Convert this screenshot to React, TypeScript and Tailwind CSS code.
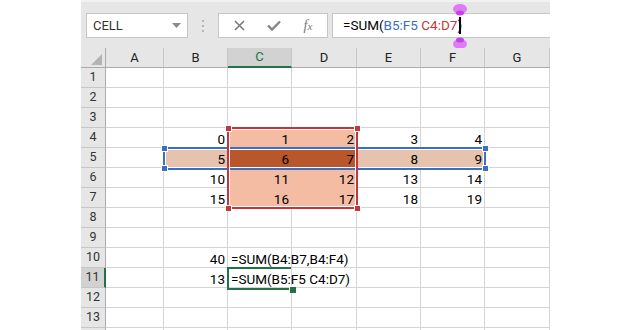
const columns = [
  { key: "A", w: 58 },
  { key: "B", w: 64 },
  { key: "C", w: 64 },
  { key: "D", w: 65 },
  { key: "E", w: 64 },
  { key: "F", w: 64 },
  { key: "G", w: 65 },
]

const rows = [1, 2, 3, 4, 5, 6, 7, 8, 9, 10, 11, 12, 13, 14]

const values: Record<number, Record<string, string>> = {
  4: { B: "0", C: "1", D: "2", E: "3", F: "4" },
  5: { B: "5", C: "6", D: "7", E: "8", F: "9" },
  6: { B: "10", C: "11", D: "12", E: "13", F: "14" },
  7: { B: "15", C: "16", D: "17", E: "18", F: "19" },
  10: { B: "40" },
  11: { B: "13" },
}

const formulas: Record<number, string> = {
  10: "=SUM(B4:B7,B4:F4)",
  11: "=SUM(B5:F5 C4:D7)",
}

function cellFill(row: number, col: string) {
  const inRed = row >= 4 && row <= 7 && (col === "C" || col === "D")
  if (row === 5 && inRed) return "bg-[#b8572b] border-[#b8572b]"
  if (inRed) return "bg-[#f4bca2] border-[#f4bca2]"
  if (row === 5 && (col === "B" || col === "E" || col === "F")) return "bg-[#e5c3af] border-[#e5c3af]"
  return "border-[#d4d4d4]"
}

function Handle({ x, y, color }: { x: number; y: number; color: string }) {
  return (
    <div
      className={`absolute w-[7px] h-[7px] border border-white ${color}`}
      style={{ left: x - 3, top: y - 3 }}
    />
  )
}

function Toolbar() {
  return (
    <div className="h-[48px] border-t-2 border-[#f2f2f2] flex items-start pt-[11px] pl-[5px]">
      <div className="w-[102px] h-[25px] bg-white border border-[#c6c6c6] flex items-center justify-between pl-[6px] pr-[6px]">
        <span className="text-[13px] text-[#333] font-['Roboto',sans-serif]">CELL</span>
        <svg width="9" height="5" viewBox="0 0 9 5">
          <path d="M0 0 L9 0 L4.5 5 Z" fill="#8a8a8a" />
        </svg>
      </div>
      <div className="w-[30px] h-[25px] flex flex-col items-center justify-center gap-[3px]">
        <div className="w-[2px] h-[2px] bg-[#b5b5b5]" />
        <div className="w-[2px] h-[2px] bg-[#b5b5b5]" />
        <div className="w-[2px] h-[2px] bg-[#b5b5b5]" />
      </div>
      <div className="w-[110px] h-[25px] bg-white border border-[#c6c6c6] flex items-center">
        <div className="w-[38px] flex justify-center pl-[2px]">
          <svg width="11" height="11" viewBox="0 0 11 11">
            <path d="M1 1 L10 10 M10 1 L1 10" stroke="#7a7a7a" strokeWidth="1.6" />
          </svg>
        </div>
        <div className="w-[34px] flex justify-center">
          <svg width="14" height="11" viewBox="0 0 14 11">
            <path d="M1 5.5 L5 9.5 L13 1.5" stroke="#858585" strokeWidth="2.4" fill="none" />
          </svg>
        </div>
        <div className="w-[34px] flex justify-center">
          <span className="text-[14px] italic text-[#777] font-['Liberation_Serif',serif] leading-none">
            f<span className="text-[11px]">x</span>
          </span>
        </div>
      </div>
      <div className="relative ml-[4px] w-[218px] h-[25px] bg-white border border-[#c6c6c6] border-r-0 flex items-center pl-[10px]">
        <span className="text-[13.5px] text-black font-['Roboto',sans-serif] whitespace-nowrap">
          =SUM(<span className="text-[#3a6fc4]">B5:F5</span>
          <span className="text-[#c8353a]"> C4:D7</span>)
        </span>
        <div className="absolute left-[126px] top-[3px] w-[2px] h-[17px] bg-black" />
        <svg className="absolute left-[120px] top-[-11px]" width="14" height="14" viewBox="0 0 14 14">
          <ellipse cx="7" cy="6" rx="7" ry="5" fill="#e07af7" />
          <ellipse cx="7" cy="10" rx="4" ry="2.5" fill="#c342e2" />
        </svg>
        <svg className="absolute left-[120px] top-[22px]" width="14" height="14" viewBox="0 0 14 14">
          <ellipse cx="7" cy="8" rx="7" ry="5" fill="#e07af7" />
          <ellipse cx="7" cy="4" rx="4" ry="2.5" fill="#c342e2" />
        </svg>
      </div>
    </div>
  )
}

function Sheet() {
  return (
    <div className="relative grid grid-cols-[25px_58px_64px_64px_65px_64px_64px_65px] bg-white">
      <div className="h-[20px] bg-[#e6e6e6] border-r border-b border-[#ababab] flex items-end justify-end pr-[3px] pb-[2px]">
        <svg width="11" height="11" viewBox="0 0 11 11">
          <path d="M11 0 L11 11 L0 11 Z" fill="#b4b4b4" />
        </svg>
      </div>
      {columns.map((c) => (
        <div
          key={c.key}
          className={
            c.key === "C"
              ? "h-[20px] bg-[#d2d2d2] border-r border-[#c6c6c6] border-b-2 border-b-[#217346] flex items-center justify-center text-[13px] text-[#217346] font-['Roboto',sans-serif]"
              : "h-[20px] bg-[#e6e6e6] border-r border-[#c6c6c6] border-b border-b-[#ababab] flex items-center justify-center text-[13px] text-[#222] font-['Roboto',sans-serif]"
          }
        >
          {c.key}
        </div>
      ))}
      {rows.map((r) => (
        <div key={r} className="contents">
          <div
            className={
              r === 11
                ? "h-[20px] bg-[#d2d2d2] border-b border-[#c6c6c6] border-r-2 border-r-[#217346] flex items-center justify-center text-[12.5px] text-[#333] font-['Roboto',sans-serif]"
                : "h-[20px] bg-[#e6e6e6] border-b border-[#c6c6c6] border-r border-r-[#ababab] flex items-center justify-center text-[12.5px] text-[#333] font-['Roboto',sans-serif]"
            }
          >
            {r < 14 ? r : ""}
          </div>
          {columns.map((c) => (
            <div
              key={c.key}
              className={`h-[20px] border-r border-b ${cellFill(r, c.key)} pt-[3px] px-[2px] text-[13.5px] leading-[16px] text-black font-['Roboto',sans-serif] whitespace-nowrap ${
                formulas[r] && c.key === "C" ? "text-left pl-[3px]" : "text-right"
              }`}
            >
              {formulas[r] && c.key === "C" ? (
                <span className="relative z-10">{formulas[r]}</span>
              ) : (
                values[r]?.[c.key] ?? ""
              )}
            </div>
          ))}
        </div>
      ))}

      {/* B5:F5 range */}
      <div className="absolute left-[82px] top-[99px] w-[323px] h-[23px] border-2 border-[#3a6fc4] shadow-[inset_0_0_0_1px_white]" />
      {/* C4:D7 range */}
      <div className="absolute left-[146px] top-[79px] w-[131px] h-[82px] border-2 border-[#c5363b] shadow-[inset_0_0_0_1px_white]" />
      <Handle x={83} y={100} color="bg-[#3a6fc4]" />
      <Handle x={83} y={120} color="bg-[#3a6fc4]" />
      <Handle x={404} y={100} color="bg-[#3a6fc4]" />
      <Handle x={404} y={120} color="bg-[#3a6fc4]" />
      <Handle x={147} y={80} color="bg-[#c5363b]" />
      <Handle x={276} y={80} color="bg-[#c5363b]" />
      <Handle x={147} y={160} color="bg-[#c5363b]" />
      <Handle x={276} y={160} color="bg-[#c5363b]" />

      {/* active cell C11 */}
      <div className="absolute left-[146px] top-[219px] w-[64px] h-[23px] border-2 border-r-0 border-[#217346]" />
      <div className="absolute left-[208px] top-[238px] w-[7px] h-[7px] bg-[#217346] border-l border-t border-white" />
    </div>
  )
}

export default function App() {
  return (
    <div className="w-[631px] h-[330px] bg-white overflow-hidden">
      <div className="ml-[81px] w-[469px] h-[330px] bg-[#e6e6e6] overflow-hidden">
        <Toolbar />
        <Sheet />
      </div>
    </div>
  )
}
